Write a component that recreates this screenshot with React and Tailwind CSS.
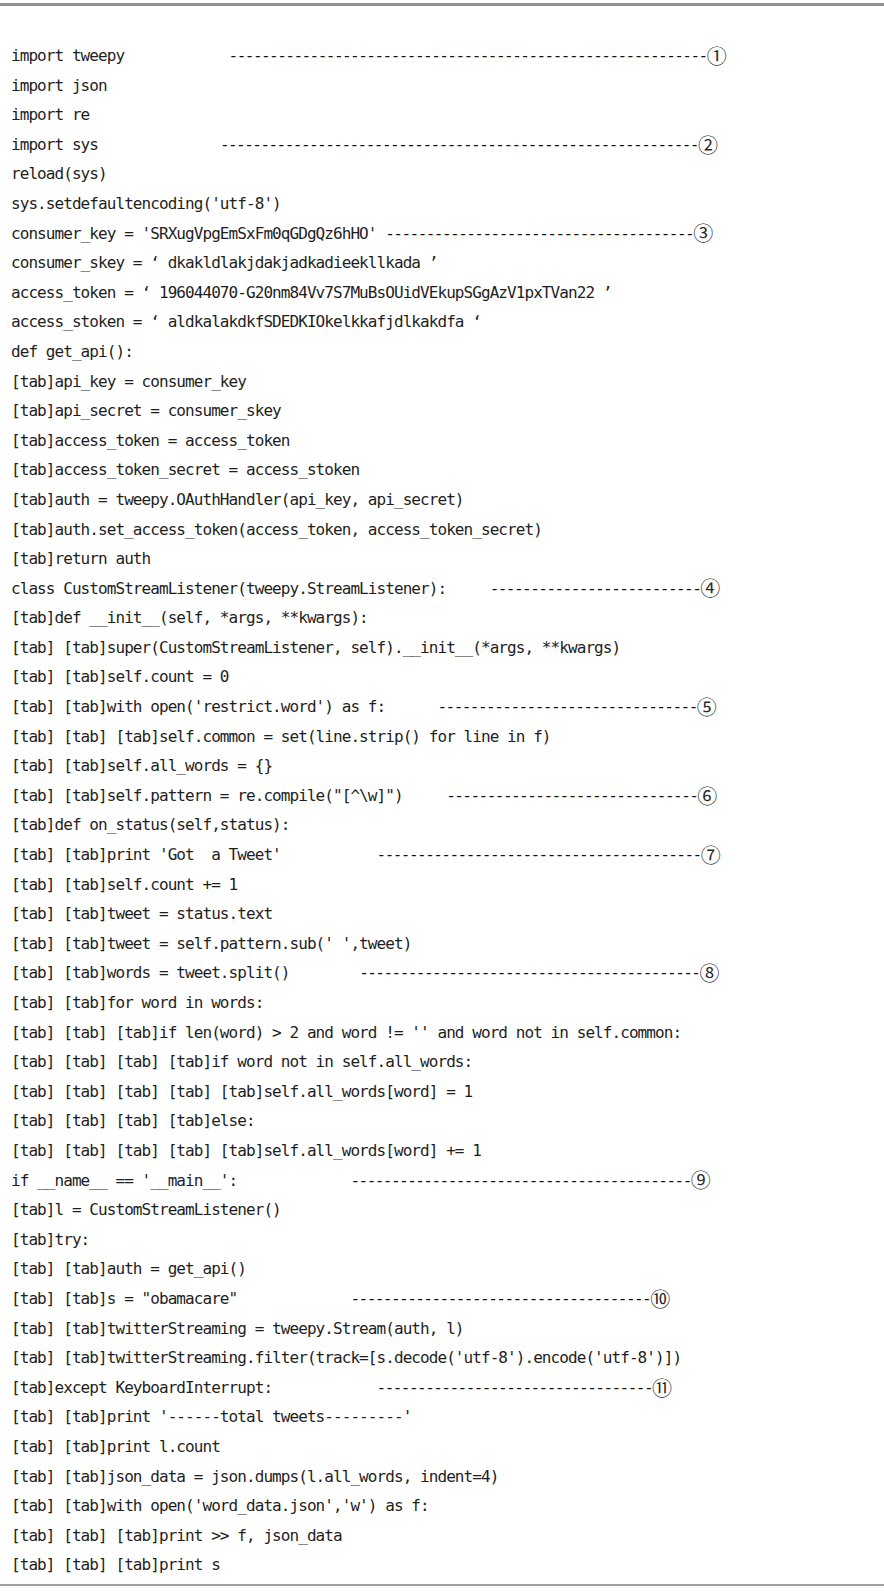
const lines = [
  { code: "import tweepy", col: 25, dashes: 59, mark: "①" },
  { code: "import json" },
  { code: "import re" },
  { code: "import sys", col: 24, dashes: 59, mark: "②" },
  { code: "reload(sys)" },
  { code: "sys.setdefaultencoding('utf-8')" },
  { code: "consumer_key = 'SRXugVpgEmSxFm0qGDgQz6hHO'", col: 43, dashes: 38, mark: "③" },
  { code: "consumer_skey = ‘ dkakldlakjdakjadkadieekllkada ’" },
  { code: "access_token = ‘ 196044070-G20nm84Vv7S7MuBsOUidVEkupSGgAzV1pxTVan22 ’" },
  { code: "access_stoken = ‘ aldkalakdkfSDEDKIOkelkkafjdlkakdfa ‘" },
  { code: "def get_api():" },
  { code: "[tab]api_key = consumer_key" },
  { code: "[tab]api_secret = consumer_skey" },
  { code: "[tab]access_token = access_token" },
  { code: "[tab]access_token_secret = access_stoken" },
  { code: "[tab]auth = tweepy.OAuthHandler(api_key, api_secret)" },
  { code: "[tab]auth.set_access_token(access_token, access_token_secret)" },
  { code: "[tab]return auth" },
  { code: "class CustomStreamListener(tweepy.StreamListener):", col: 55, dashes: 26, mark: "④" },
  { code: "[tab]def __init__(self, *args, **kwargs):" },
  { code: "[tab] [tab]super(CustomStreamListener, self).__init__(*args, **kwargs)" },
  { code: "[tab] [tab]self.count = 0" },
  { code: "[tab] [tab]with open('restrict.word') as f:", col: 49, dashes: 32, mark: "⑤" },
  { code: "[tab] [tab] [tab]self.common = set(line.strip() for line in f)" },
  { code: "[tab] [tab]self.all_words = {}" },
  { code: "[tab] [tab]self.pattern = re.compile(\"[^\\w]\")", col: 50, dashes: 31, mark: "⑥" },
  { code: "[tab]def on_status(self,status):" },
  { code: "[tab] [tab]print 'Got  a Tweet'", col: 42, dashes: 40, mark: "⑦" },
  { code: "[tab] [tab]self.count += 1" },
  { code: "[tab] [tab]tweet = status.text" },
  { code: "[tab] [tab]tweet = self.pattern.sub(' ',tweet)" },
  { code: "[tab] [tab]words = tweet.split()", col: 40, dashes: 42, mark: "⑧" },
  { code: "[tab] [tab]for word in words:" },
  { code: "[tab] [tab] [tab]if len(word) > 2 and word != '' and word not in self.common:" },
  { code: "[tab] [tab] [tab] [tab]if word not in self.all_words:" },
  { code: "[tab] [tab] [tab] [tab] [tab]self.all_words[word] = 1" },
  { code: "[tab] [tab] [tab] [tab]else:" },
  { code: "[tab] [tab] [tab] [tab] [tab]self.all_words[word] += 1" },
  { code: "if __name__ == '__main__':", col: 39, dashes: 42, mark: "⑨" },
  { code: "[tab]l = CustomStreamListener()" },
  { code: "[tab]try:" },
  { code: "[tab] [tab]auth = get_api()" },
  { code: "[tab] [tab]s = \"obamacare\"", col: 39, dashes: 37, mark: "⑩" },
  { code: "[tab] [tab]twitterStreaming = tweepy.Stream(auth, l)" },
  { code: "[tab] [tab]twitterStreaming.filter(track=[s.decode('utf-8').encode('utf-8')])" },
  { code: "[tab]except KeyboardInterrupt:", col: 42, dashes: 34, mark: "⑪" },
  { code: "[tab] [tab]print '------total tweets---------'" },
  { code: "[tab] [tab]print l.count" },
  { code: "[tab] [tab]json_data = json.dumps(l.all_words, indent=4)" },
  { code: "[tab] [tab]with open('word_data.json','w') as f:" },
  { code: "[tab] [tab] [tab]print >> f, json_data" },
  { code: "[tab] [tab] [tab]print s" },
]

function CodeLine({ line }) {
  return (
    <div className="flex items-center h-[29.6px] whitespace-pre">
      <span>{line.mark ? line.code.padEnd(line.col) : line.code}</span>
      {line.mark && (
        <>
          <span className="tracking-[-1.53px] text-[#111]">{"-".repeat(line.dashes)}</span>
          <span className="font-['Noto_Sans_CJK_KR',sans-serif] text-[20px] leading-none tracking-normal text-[#2a2a2a]">
            {line.mark}
          </span>
        </>
      )}
    </div>
  )
}

export default function App() {
  return (
    <div className="min-h-screen bg-white">
      <div className="pt-[3px]">
        <div className="h-[3px] bg-[#919191]" />
      </div>

      <div className="pt-[35px] pl-[11px] font-['DejaVu_Sans_Mono',monospace] text-[16px] leading-[29.6px] tracking-[-0.93px] text-[#1e1e1e]">
        {lines.map((line, i) => (
          <CodeLine key={i} line={line} />
        ))}
      </div>

      <div className="mt-[4px] h-[2px] bg-[#a0a0a0]" />
    </div>
  )
}
